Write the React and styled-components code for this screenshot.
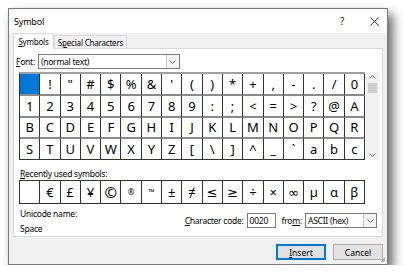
import styled, { createGlobalStyle } from 'styled-components';

const GlobalStyle = createGlobalStyle`
  body {
    margin: 0;
    background: #fff;
    font-family: "Noto Sans", "Open Sans", sans-serif;
    color: #000;
  }
`;

const Window = styled.div`
  box-sizing: border-box;
  margin: 8px 0 0 8px;
  width: 380px;
  height: 257px;
  border: 1px solid #7a7a7a;
  background: #f0f0f0;
  box-shadow: 5px 6px 10px rgba(0, 0, 0, 0.6);
  display: flex;
  flex-direction: column;
  position: relative;
`;

const TitleBar = styled.div`
  height: 24px;
  background: #fff;
  display: flex;
  align-items: center;
  padding-left: 5px;
  font-size: 9px;
  letter-spacing: -0.2px;
`;

const TitleText = styled.div`
  flex: 1;
`;

const TitleButton = styled.div`
  width: 26px;
  margin-right: ${p => p.$mr || 0}px;
  display: flex;
  justify-content: center;
  font-size: 10px;
  color: #222;
`;

const Tabs = styled.div`
  display: flex;
  align-items: flex-end;
  height: 15px;
  padding-left: 4px;
  font-size: 8px;
  letter-spacing: -0.2px;
`;

const Tab = styled.div`
  box-sizing: border-box;
  width: ${p => p.$w}px;
  height: ${p => (p.$active ? 16 : 13)}px;
  border: 1px solid #d9d9d9;
  border-bottom: none;
  background: ${p => (p.$active ? '#fff' : '#f0f0f0')};
  display: flex;
  align-items: center;
  justify-content: center;
  margin-bottom: ${p => (p.$active ? -1 : 0)}px;
  position: relative;
  z-index: ${p => (p.$active ? 1 : 0)};
`;

const Panel = styled.div`
  box-sizing: border-box;
  margin: 0 4px;
  height: 189px;
  background: #fff;
  border: 1px solid #d9d9d9;
  padding: 5px 0 0 5px;
  font-size: 8.5px;
  line-height: 12px;
  letter-spacing: -0.25px;
`;

const FontRow = styled.div`
  display: flex;
  align-items: center;
  gap: 3px;
  margin-left: -3px;
`;

const Select = styled.div`
  box-sizing: border-box;
  width: ${p => p.$width}px;
  height: 15px;
  border: 1px solid #7a7a7a;
  display: flex;
  align-items: center;
  justify-content: space-between;
  padding-left: 2px;
  background: #fff;
`;

const DropButton = styled.div`
  box-sizing: border-box;
  width: 13px;
  height: 13px;
  border-left: 1px solid #c8c8c8;
  background: #f4f4f4;
  display: flex;
  align-items: center;
  justify-content: center;
`;

const GridArea = styled.div`
  display: flex;
  margin-top: 3px;
`;

const CharGrid = styled.div`
  box-sizing: border-box;
  width: 346px;
  display: grid;
  grid-template-columns: repeat(17, 1fr);
  border-top: 2px solid #a0a0a0;
  border-left: 1px solid #333;
  letter-spacing: 0;
`;

const Cell = styled.div`
  box-sizing: border-box;
  height: ${p => p.$h}px;
  border-right: 1px solid #333;
  border-bottom: ${p => p.$bottom};
  display: flex;
  align-items: center;
  justify-content: center;
  font-size: ${p => p.$fs || 13}px;
  background: ${p => (p.$selected ? '#0078d7' : '#fff')};
  font-family: "Noto Sans", "DejaVu Sans", sans-serif;
  line-height: 1;
`;

const ScrollBar = styled.div`
  box-sizing: border-box;
  width: 13px;
  height: 88px;
  margin-left: 1px;
  background: #f0f0f0;
  display: flex;
  flex-direction: column;
  align-items: center;
  padding: 3px 0;
`;

const Thumb = styled.div`
  width: 9px;
  height: 10px;
  background: #cdcdcd;
  margin: 4px 0 auto;
`;

const Label = styled.div`
  margin-top: ${p => p.$mt || 0}px;
  margin-left: 1px;
`;

const Recent = styled(CharGrid)`
  border-top: 1px solid #333;
`;

const BottomRow = styled.div`
  display: flex;
  justify-content: space-between;
  align-items: flex-start;
  padding-right: 5px;
`;

const CodeGroup = styled.div`
  display: flex;
  align-items: center;
  margin-top: 9px;
`;

const Input = styled.div`
  box-sizing: border-box;
  width: 29px;
  height: 15px;
  border: 1px solid #7a7a7a;
  padding-left: 2px;
  display: flex;
  align-items: center;
  margin: 0 6px 0 3px;
`;

const FromLabel = styled.span`
  margin-right: 3px;
`;

const Footer = styled.div`
  display: flex;
  justify-content: flex-end;
  gap: 7px;
  padding: 7px 4px 0 0;
`;

const Button = styled.div`
  box-sizing: border-box;
  width: ${p => p.$w}px;
  height: 16px;
  background: #e1e1e1;
  border: 1px solid ${p => (p.$default ? '#0078d7' : '#adadad')};
  box-shadow: ${p => (p.$default ? 'inset 0 0 0 1px #0078d7' : 'none')};
  font-size: 8.5px;
  display: flex;
  align-items: center;
  justify-content: center;
`;

const Grip = styled.svg`
  position: absolute;
  right: 1px;
  bottom: 1px;
`;

const rows = [
  [' ', '!', '"', '#', '$', '%', '&', "'", '(', ')', '*', '+', ',', '-', '.', '/', '0'],
  ['1', '2', '3', '4', '5', '6', '7', '8', '9', ':', ';', '<', '=', '>', '?', '@', 'A'],
  ['B', 'C', 'D', 'E', 'F', 'G', 'H', 'I', 'J', 'K', 'L', 'M', 'N', 'O', 'P', 'Q', 'R'],
  ['S', 'T', 'U', 'V', 'W', 'X', 'Y', 'Z', '[', '\\', ']', '^', '_', '`', 'a', 'b', 'c'],
];

const rowHeights = [22, 22, 21, 21];

const recent = [' ', '€', '£', '¥', '©', '®', '™', '±', '≠', '≤', '≥', '÷', '×', '∞', 'µ', 'α', 'β'];

const small = { '®': 8, '™': 8, '©': 15 };

const Chevron = ({ up }) => (
  <svg width="7" height="4" viewBox="0 0 7 4">
    <path d={up ? 'M0.5 3.5 L3.5 0.5 L6.5 3.5' : 'M0.5 0.5 L3.5 3.5 L6.5 0.5'} fill="none" stroke="#606060" strokeWidth="1" />
  </svg>
);

const CloseIcon = () => (
  <svg width="9" height="9" viewBox="0 0 9 9">
    <path d="M0.5 0.5 L8.5 8.5 M8.5 0.5 L0.5 8.5" stroke="#333" strokeWidth="1" />
  </svg>
);

const App = () => (
  <>
    <GlobalStyle />
    <Window>
      <TitleBar>
        <TitleText>Symbol</TitleText>
        <TitleButton $mr={6}>?</TitleButton>
        <TitleButton><CloseIcon /></TitleButton>
      </TitleBar>
      <Tabs>
        <Tab $active $w={41}><u>S</u>ymbols</Tab>
        <Tab $w={73}>S<u>p</u>ecial Characters</Tab>
      </Tabs>
      <Panel>
        <FontRow>
          <span><u>F</u>ont:</span>
          <Select $width={142}>
            (normal text)
            <DropButton><Chevron /></DropButton>
          </Select>
        </FontRow>
        <GridArea>
          <CharGrid>
            {rows.map((row, r) =>
              row.map((ch, c) => (
                <Cell
                  key={`${r}-${c}`}
                  $h={rowHeights[r]}
                  $bottom={r === 3 ? '1px solid #333' : '2px solid #8a8a8a'}
                  $selected={r === 0 && c === 0}
                >
                  {ch}
                </Cell>
              ))
            )}
          </CharGrid>
          <ScrollBar>
            <Chevron up />
            <Thumb />
            <Chevron />
          </ScrollBar>
        </GridArea>
        <Label $mt={8}><u>R</u>ecently used symbols:</Label>
        <Recent>
          {recent.map((ch, i) => (
            <Cell key={i} $h={23} $bottom="1px solid #333" $fs={small[ch] || 13}>
              {ch}
            </Cell>
          ))}
        </Recent>
        <BottomRow>
          <div>
            <Label $mt={4}>Unicode name:</Label>
            <Label $mt={3}>Space</Label>
          </div>
          <CodeGroup>
            <span><u>C</u>haracter code:</span>
            <Input>0020</Input>
            <FromLabel>fro<u>m</u>:</FromLabel>
            <Select $width={72}>
              ASCII (hex)
              <DropButton><Chevron /></DropButton>
            </Select>
          </CodeGroup>
        </BottomRow>
      </Panel>
      <Footer>
        <Button $w={50} $default><u>I</u>nsert</Button>
        <Button $w={50}>Cancel</Button>
      </Footer>
      <Grip width="6" height="6" viewBox="0 0 6 6">
        <path d="M5 1 L1 5 M5 3 L3 5" stroke="#8a8a8a" strokeWidth="1" />
      </Grip>
    </Window>
  </>
);

export default App;
